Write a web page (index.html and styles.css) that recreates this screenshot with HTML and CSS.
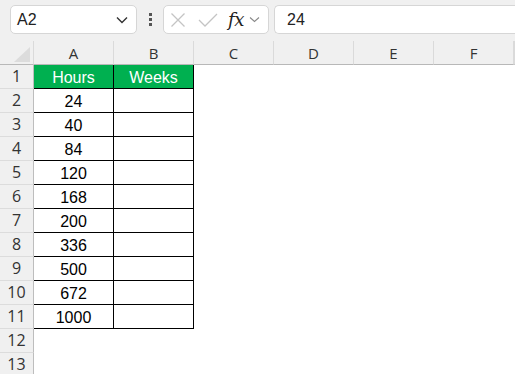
FILE: index.html
```html
<!DOCTYPE html>
<html>
<head>
<meta charset="utf-8">
<link rel="stylesheet" href="styles.css">
</head>
<body>
<div class="toolbar">
  <div class="namebox">
    <span class="name">A2</span>
    <svg class="chev" width="12" height="8" viewBox="0 0 12 8"><path d="M1 1.5 L6 6.5 L11 1.5" fill="none" stroke="#333" stroke-width="1.4"/></svg>
  </div>
  <div class="dots"><i></i><i></i><i></i></div>
  <div class="fxbox">
    <svg class="ic" width="16" height="16" viewBox="0 0 16 16"><path d="M1.5 1.5 L14.5 14.5 M14.5 1.5 L1.5 14.5" stroke="#c4c4c4" stroke-width="1.3" fill="none"/></svg>
    <svg class="ic ck" width="20" height="16" viewBox="0 0 20 16"><path d="M1 8 L7 14 L19 2" stroke="#c4c4c4" stroke-width="1.3" fill="none"/></svg>
    <span class="fx">fx</span>
    <svg class="chev2" width="11" height="7" viewBox="0 0 11 7"><path d="M1 1.5 L5.5 5.5 L10 1.5" fill="none" stroke="#8a8a8a" stroke-width="1.1"/></svg>
  </div>
  <div class="formula">24</div>
</div>
<div class="sheet">
  <div class="corner"><svg width="34" height="24" viewBox="0 0 34 24"><polygon points="30,6 30,21 14,21" fill="#dcdcdc"/></svg></div>
  <div class="ch">A</div><div class="ch">B</div><div class="ch">C</div><div class="ch">D</div><div class="ch">E</div><div class="ch">F</div><div class="ch"></div>

  <div class="rh">1</div><div class="c hd">Hours</div><div class="c hd">Weeks</div><div class="c"></div><div class="c"></div><div class="c"></div><div class="c"></div><div class="c"></div>
  <div class="rh">2</div><div class="c t">24</div><div class="c t"></div><div class="c"></div><div class="c"></div><div class="c"></div><div class="c"></div><div class="c"></div>
  <div class="rh">3</div><div class="c t">40</div><div class="c t"></div><div class="c"></div><div class="c"></div><div class="c"></div><div class="c"></div><div class="c"></div>
  <div class="rh">4</div><div class="c t">84</div><div class="c t"></div><div class="c"></div><div class="c"></div><div class="c"></div><div class="c"></div><div class="c"></div>
  <div class="rh">5</div><div class="c t">120</div><div class="c t"></div><div class="c"></div><div class="c"></div><div class="c"></div><div class="c"></div><div class="c"></div>
  <div class="rh">6</div><div class="c t">168</div><div class="c t"></div><div class="c"></div><div class="c"></div><div class="c"></div><div class="c"></div><div class="c"></div>
  <div class="rh">7</div><div class="c t">200</div><div class="c t"></div><div class="c"></div><div class="c"></div><div class="c"></div><div class="c"></div><div class="c"></div>
  <div class="rh">8</div><div class="c t">336</div><div class="c t"></div><div class="c"></div><div class="c"></div><div class="c"></div><div class="c"></div><div class="c"></div>
  <div class="rh">9</div><div class="c t">500</div><div class="c t"></div><div class="c"></div><div class="c"></div><div class="c"></div><div class="c"></div><div class="c"></div>
  <div class="rh">10</div><div class="c t">672</div><div class="c t"></div><div class="c"></div><div class="c"></div><div class="c"></div><div class="c"></div><div class="c"></div>
  <div class="rh">11</div><div class="c t">1000</div><div class="c t"></div><div class="c"></div><div class="c"></div><div class="c"></div><div class="c"></div><div class="c"></div>
  <div class="rh">12</div><div class="c"></div><div class="c"></div><div class="c"></div><div class="c"></div><div class="c"></div><div class="c"></div><div class="c"></div>
  <div class="rh">13</div><div class="c"></div><div class="c"></div><div class="c"></div><div class="c"></div><div class="c"></div><div class="c"></div><div class="c"></div>
</div>
</body>
</html>
```

FILE: styles.css
```css
html, body {
  margin: 0;
  padding: 0;
  background: #ffffff;
  overflow: hidden;
  width: 515px;
  height: 374px;
  font-family: "Liberation Sans", Arial, sans-serif;
}

.toolbar {
  display: flex;
  align-items: flex-start;
  height: 41px;
  box-sizing: border-box;
  padding: 5px 0 0 10px;
  background: #f0f0f0;
  white-space: nowrap;
}

.namebox {
  box-sizing: border-box;
  width: 127px;
  height: 29px;
  background: #fff;
  border: 1px solid #d6d6d6;
  border-radius: 5px;
  display: flex;
  align-items: center;
  justify-content: space-between;
  padding: 0 8px 0 6px;
}

.name {
  font-size: 16px;
  color: #222;
}

.dots {
  display: flex;
  flex-direction: column;
  gap: 2px;
  margin: 8px 11px 0 12px;
}
.dots i {
  display: block;
  width: 3px;
  height: 3px;
  background: #555;
}

.fxbox {
  box-sizing: border-box;
  width: 106px;
  height: 29px;
  background: #fff;
  border: 1px solid #d6d6d6;
  border-radius: 5px;
  display: flex;
  align-items: center;
  padding-left: 6px;
}
.ic { display: block; }
.ck { margin-left: 12px; }
.fx {
  font-family: "DejaVu Serif", "Liberation Serif", serif;
  font-style: italic;
  font-size: 18px;
  color: #222;
  margin-left: 10px;
  letter-spacing: -0.5px;
}
.chev2 { margin-left: 5px; }

.formula {
  box-sizing: border-box;
  flex: 1;
  min-width: 0;
  height: 29px;
  margin-left: 5px;
  background: #fff;
  border: 1px solid #d6d6d6;
  border-right: none;
  border-radius: 5px 0 0 5px;
  font-size: 16px;
  color: #222;
  line-height: 27px;
  padding-left: 12px;
}

.sheet {
  display: grid;
  width: 515px;
  grid-template-columns: 34px repeat(6, 80px) 1fr;
  grid-template-rows: 24px;
  grid-auto-rows: 24px;
}

.corner {
  background: #f0f0f0;
  border-bottom: 1px solid #b8b8b8;
  border-right: 1px solid #dadada;
  box-sizing: border-box;
}
.corner svg { display: block; }

.ch {
  box-sizing: border-box;
  background: #f0f0f0;
  border-bottom: 1px solid #b8b8b8;
  border-right: 1px solid #dadada;
  text-align: center;
  font-family: "Open Sans", "Noto Sans", sans-serif;
  font-size: 15px;
  line-height: 23px;
  padding-top: 1px;
  color: #333;
}

.rh {
  box-sizing: border-box;
  background: #f0f0f0;
  border-right: 1px solid #bdbdbd;
  border-bottom: 1px solid #dcdcdc;
  text-align: center;
  font-family: "Open Sans", "Noto Sans", sans-serif;
  font-size: 16px;
  line-height: 23px;
  color: #333;
}

.c {
  box-sizing: border-box;
  background: #fff;
  text-align: center;
  font-size: 16px;
  line-height: 22px;
  padding-top: 2px;
  color: #000;
}

.t, .hd {
  border-right: 1px solid #000;
  border-bottom: 1px solid #000;
}

.hd {
  background: #00b050;
  color: #fff;
}
```
